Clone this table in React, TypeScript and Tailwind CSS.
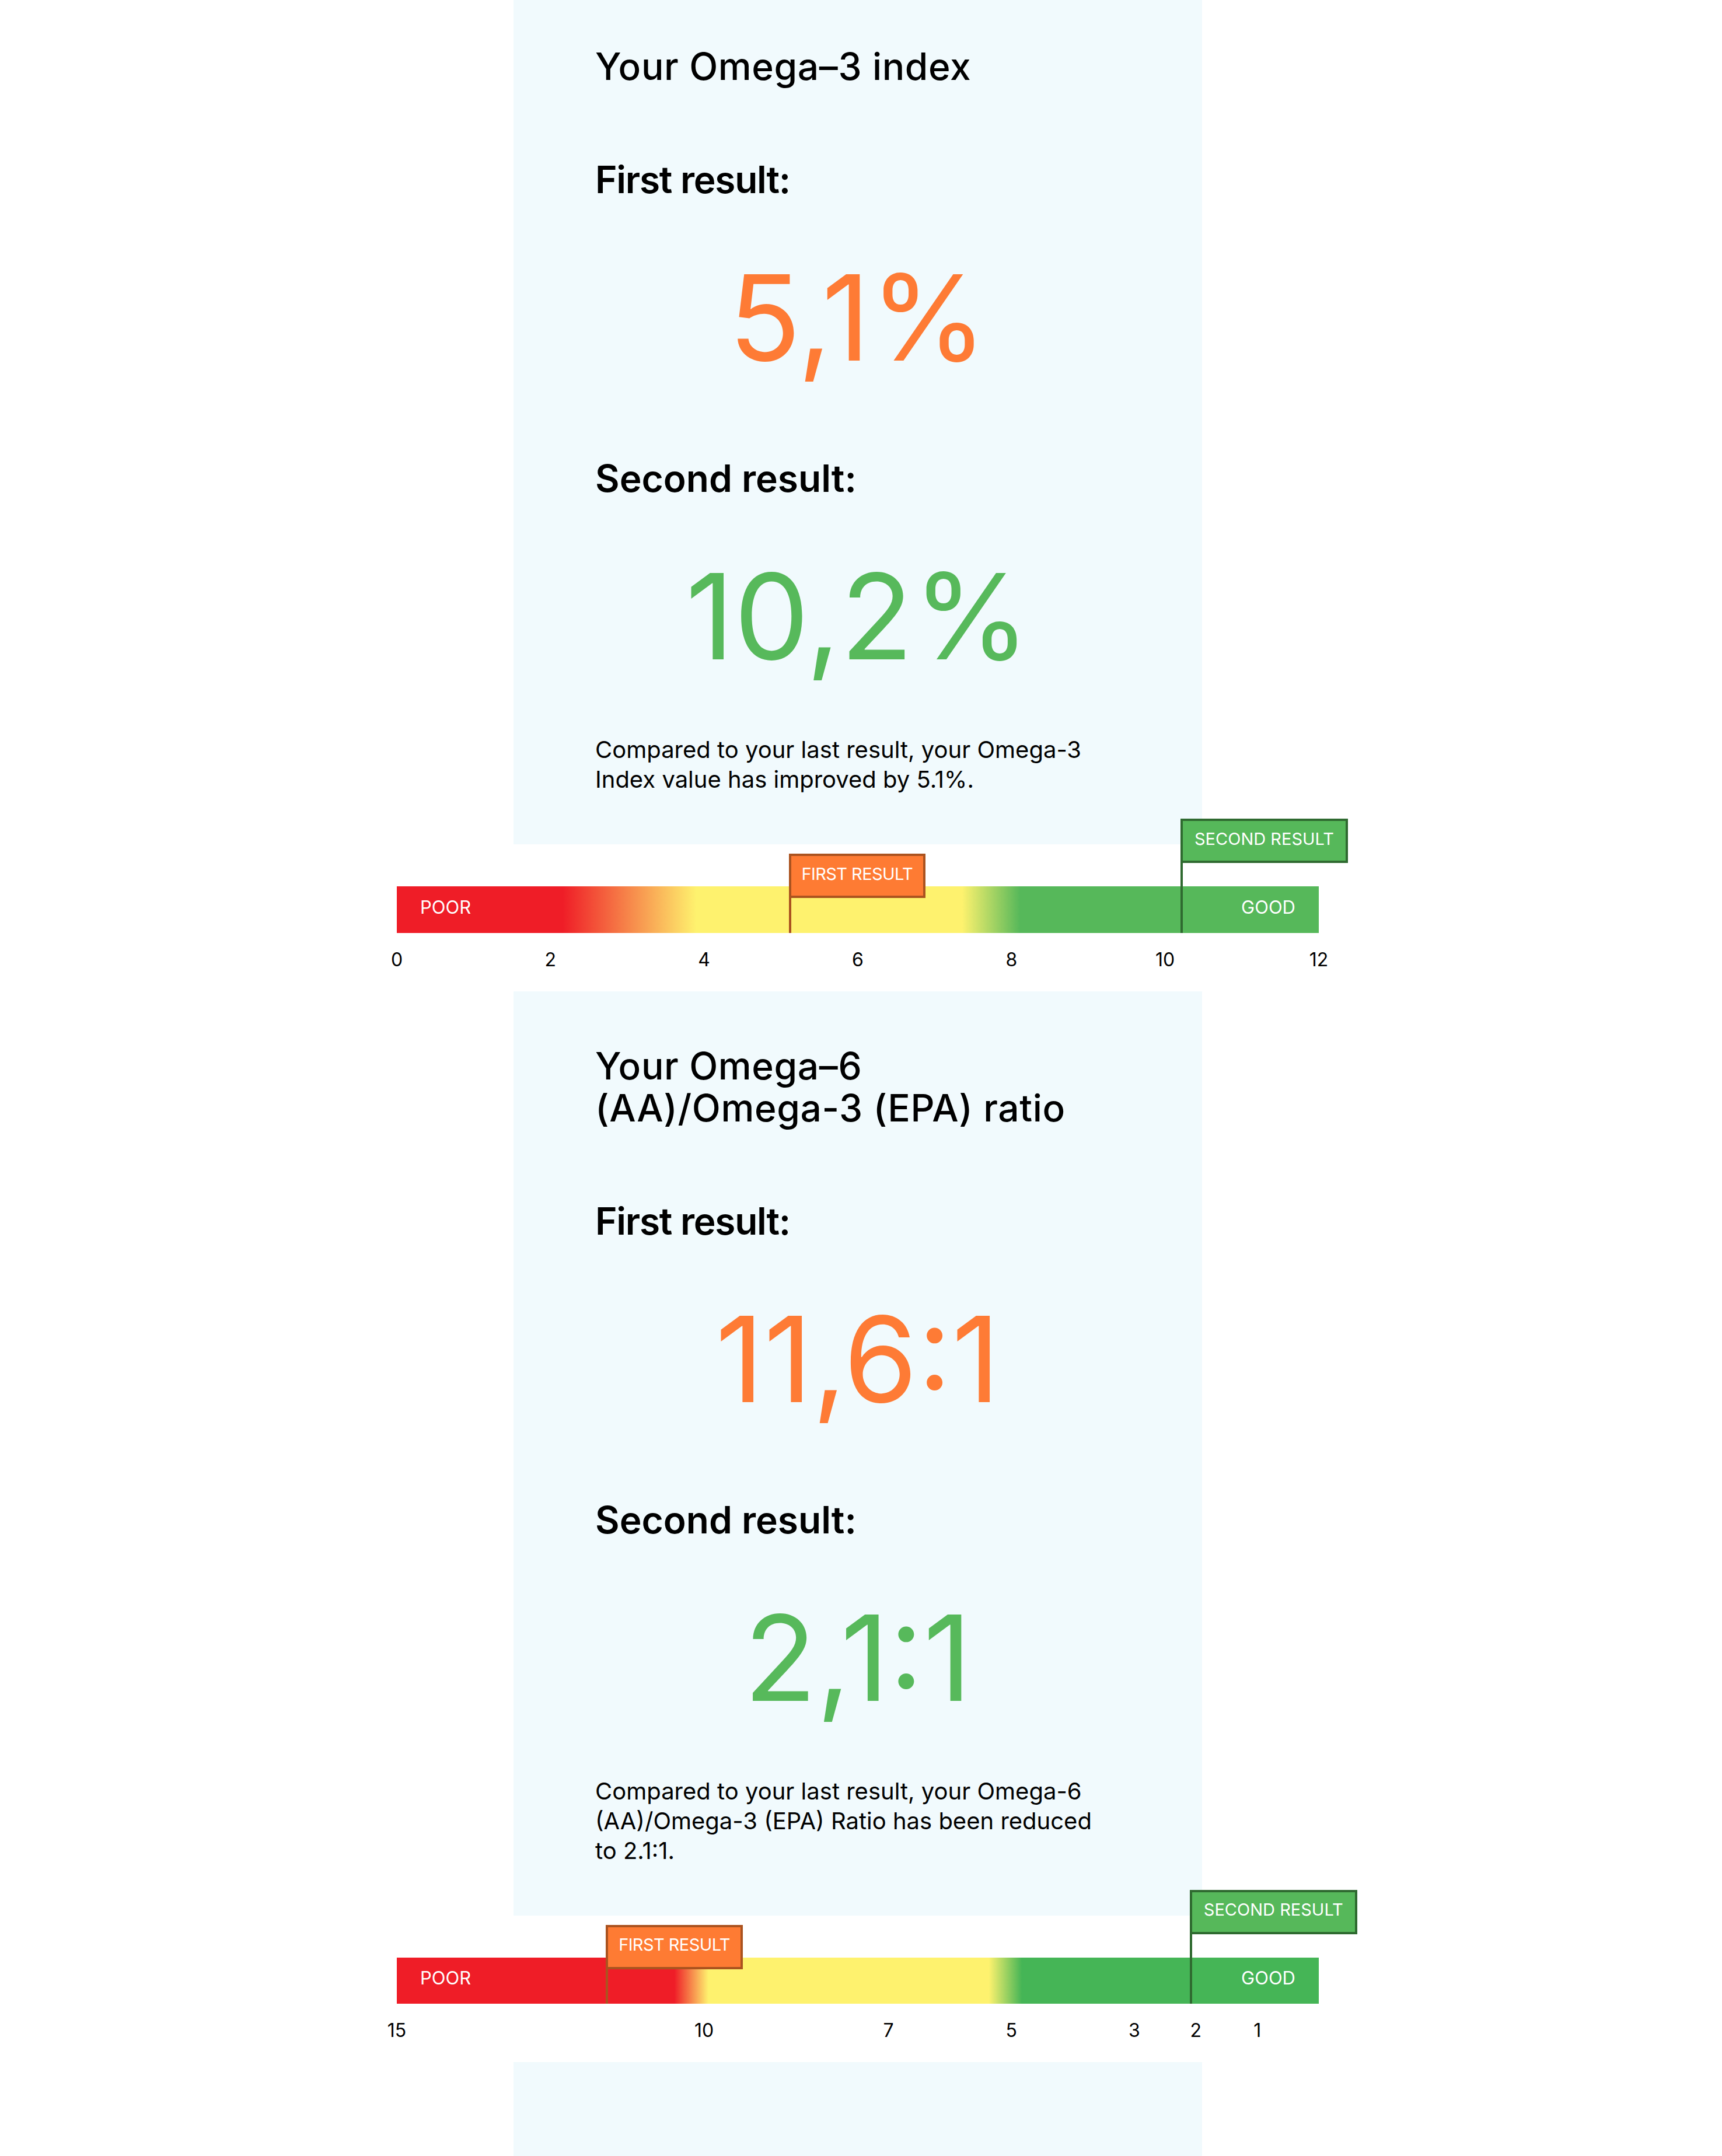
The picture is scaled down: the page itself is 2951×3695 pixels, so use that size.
import React from "react";

type Scale = {
    ticks: number[];
    min: number;
    max: number;
    reversed?: boolean;
    first: number;
    second: number;
};

type Section = {
    title: React.ReactNode;
    first: string;
    second: string;
    text: React.ReactNode;
    scale: Scale;
    gradient: "index" | "ratio";
};

const sections: Section[] = [
    {
        title: "Your Omega–3 index",
        first: "5,1%",
        second: "10,2%",
        text: (
            <>
                Compared to your last result, your Omega-3
                <br />
                Index value has improved by 5.1%.
            </>
        ),
        scale: { ticks: [0, 2, 4, 6, 8, 10, 12], min: 0, max: 12, first: 5.1, second: 10.2 },
        gradient: "index",
    },
    {
        title: (
            <>
                Your Omega–6
                <br />
                (AA)/Omega-3 (EPA) ratio
            </>
        ),
        first: "11,6:1",
        second: "2,1:1",
        text: (
            <>
                Compared to your last result, your Omega-6
                <br />
                (AA)/Omega-3 (EPA) Ratio has been reduced
                <br />
                to 2.1:1.
            </>
        ),
        scale: { ticks: [15, 10, 7, 5, 3, 2, 1], min: 0, max: 15, reversed: true, first: 11.6, second: 2.1 },
        gradient: "ratio",
    },
];

// position on the bar in percent
function pct(v: number, s: Scale) {
    const t = (v - s.min) / (s.max - s.min);
    return `${(s.reversed ? 1 - t : t) * 100}%`;
}

function Panel({ section, top }: { section: Section; top: boolean }) {
    return (
        <section
            className={
                top
                    ? "w-[1180px] bg-[#f1fafd] px-[140px] pt-[78px] pb-[86px]"
                    : "mt-[38px] w-[1180px] bg-[#f1fafd] px-[140px] pt-[92px] pb-[86px]"
            }
        >
            <h2 className="whitespace-nowrap text-[64px] leading-[72px] font-medium tracking-[0.01em] text-black">
                {section.title}
            </h2>
            <h3 className="mt-[122px] whitespace-nowrap text-[64px] leading-[72px] font-semibold tracking-[-0.02em] text-black">
                First result:
            </h3>
            <p className="mt-[98px] text-center text-[204px] leading-[204px] font-normal text-[#fe7b35]">
                {section.first}
            </p>
            <h3 className="mt-[138px] whitespace-nowrap text-[64px] leading-[72px] font-semibold text-black">
                Second result:
            </h3>
            <p className="mt-[98px] text-center text-[204px] leading-[204px] font-normal text-[#57b95b]">
                {section.second}
            </p>
            <p className="mt-[101px] whitespace-nowrap text-[40px] leading-[51px] text-black">
                {section.text}
            </p>
        </section>
    );
}

function Gauge({ section }: { section: Section }) {
    const s = section.scale;
    return (
        <>
            <div
                className={
                    section.gradient === "index"
                        ? "relative mt-[72px] h-[80px] w-[1580px] bg-[linear-gradient(90deg,#ef1d27_18%,#fef26e_32.5%,#fef26e_61.3%,#56b85a_67.6%)]"
                        : "relative mt-[72px] h-[80px] w-[1580px] bg-[linear-gradient(90deg,#ef1d27_30.1%,#fef26e_33.8%,#fef26e_64.2%,#45b556_67.8%)]"
                }
            >
                <div className="flex h-full items-center justify-between px-[40px] pb-[9px] text-[31px] leading-[31px] text-white">
                    <span>POOR</span>
                    <span>GOOD</span>
                </div>

                {/* first result flag */}
                <div
                    className="absolute top-[-56px] bottom-0 w-[4px] bg-[#ab531f]"
                    style={{ left: pct(s.first, s) }}
                />
                <div
                    className="absolute top-[-56px] flex h-[76px] items-center whitespace-nowrap border-4 border-[#ab531f] bg-[#fe7b33] px-[18px] pb-[8px] text-[29px] leading-[29px] tracking-[-0.02em] text-white"
                    style={{ left: pct(s.first, s) }}
                >
                    FIRST RESULT
                </div>

                {/* second result flag */}
                <div
                    className="absolute top-[-116px] bottom-0 w-[4px] bg-[#2f6a30]"
                    style={{ left: pct(s.second, s) }}
                />
                <div
                    className="absolute top-[-116px] flex h-[76px] items-center whitespace-nowrap border-4 border-[#2f6a30] bg-[#56b85a] px-[20px] pb-[8px] text-[29px] leading-[29px] text-white"
                    style={{ left: pct(s.second, s) }}
                >
                    SECOND RESULT
                </div>
            </div>

            <div className="relative mt-[30px] h-[32px] w-[1580px] text-[32px] leading-[32px] text-black">
                {s.ticks.map((t) => (
                    <span
                        key={t}
                        className="absolute top-0 -translate-x-1/2"
                        style={{ left: pct(t, s) }}
                    >
                        {t}
                    </span>
                ))}
            </div>
        </>
    );
}

export default function App() {
    return (
        <div className="flex h-[3695px] w-[2940px] flex-col items-center overflow-hidden bg-white font-['Inter',sans-serif]">
            {sections.map((section, i) => (
                <React.Fragment key={i}>
                    <Panel section={section} top={i === 0} />
                    <Gauge section={section} />
                </React.Fragment>
            ))}
            <section className="mt-[38px] h-[161px] w-[1180px] shrink-0 bg-[#f1fafd]" />
        </div>
    );
}
